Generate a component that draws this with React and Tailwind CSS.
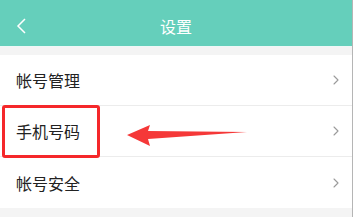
import { ChevronRight } from 'lucide-react';

const ROWS = ['帐号管理', '手机号码', '帐号安全'];

const font = { fontFamily: '"Noto Sans CJK SC", "Noto Sans", sans-serif' };

export default function App() {
  return (
    <div className="relative w-[353px] h-[217px] overflow-hidden bg-[#f4f4f4] border-r border-[#b5b5b5]" style={font}>
      {/* Header */}
      <div className="relative h-[46px] bg-[#65cfbb] flex items-center justify-center pt-[5px]">
        <svg className="absolute left-[16px] top-[18px]" width="10" height="16" viewBox="0 0 10 16">
          <path d="M9 1 L2 8 L9 15" fill="none" stroke="#fff" strokeWidth="1.5" />
        </svg>
        <span className="text-white text-[16px]">设置</span>
      </div>
      <div className="h-px bg-[#eef8f7]" />
      <div className="h-[8px]" />

      {/* List */}
      <div className="bg-white">
        {ROWS.map((r, i) => (
          <div
            key={r}
            className={`h-[51px] flex items-center justify-between pl-[16px] pr-[8px] ${i < ROWS.length - 1 ? 'border-b border-[#ececec]' : ''}`}
          >
            <span className="text-[16px] text-[#222]">{r}</span>
            <ChevronRight className="w-[16px] h-[16px] text-[#9a9a9a]" strokeWidth={1.6} />
          </div>
        ))}
      </div>

      {/* Annotation: red box + arrow */}
      <div className="absolute left-[2px] top-[105px] w-[98px] h-[53px] border-[3px] border-[#f5282a] rounded-[3px]" />
      <svg className="absolute left-[125px] top-[123px]" width="125" height="25" viewBox="0 0 125 25">
        <path d="M2 12 L25 2 L23 8 L122 9 L23 16 L25 23 Z" fill="#f53838" />
      </svg>
    </div>
  );
}
